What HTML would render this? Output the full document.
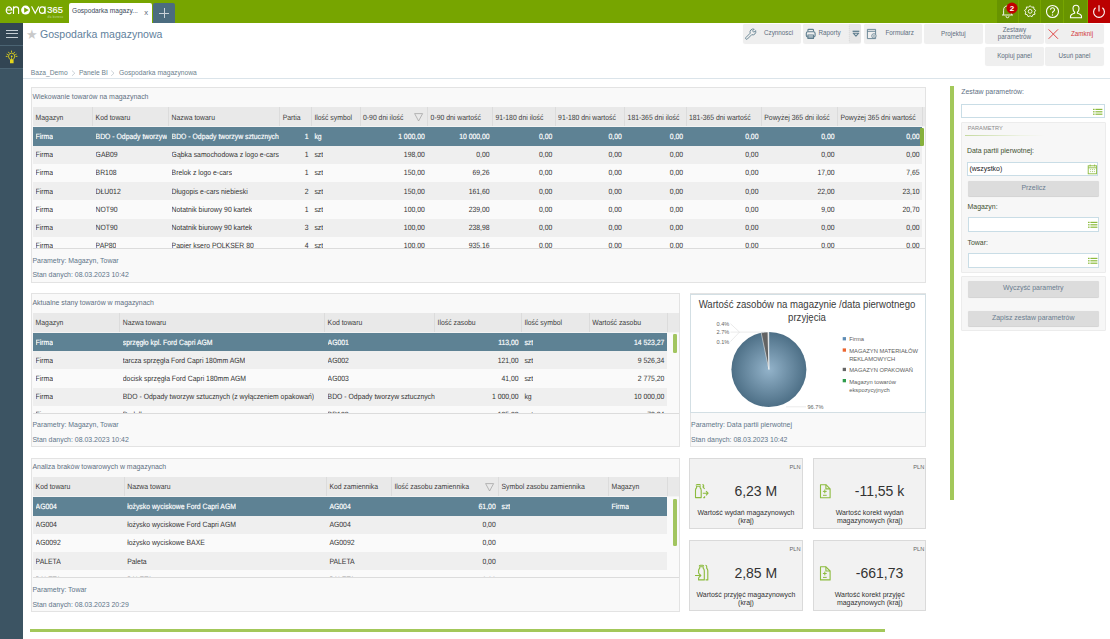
<!DOCTYPE html><html><head><meta charset="utf-8"><style>
*{box-sizing:border-box;margin:0;padding:0}
html,body{width:1110px;height:639px;overflow:hidden;background:#fff;font-family:"Liberation Sans",sans-serif;color:#333}
.a{position:absolute}
.t{white-space:nowrap;position:absolute;line-height:1}
.btn{position:absolute;background:#efefef;border-radius:2px;box-shadow:0 0.5px 0.8px rgba(0,0,0,.07);color:#5d6e7e;font-size:6.3px;text-align:center;white-space:nowrap}
.panel{position:absolute;background:#f9f9f9;border:0.6px solid #e3e3e3}
.ptitle{position:absolute;font-size:6.94px;color:#5e6f82;white-space:nowrap;line-height:1}
.pfoot{position:absolute;font-size:6.94px;color:#607589;white-space:nowrap;line-height:1}
table{border-collapse:collapse;table-layout:fixed;font-size:6.94px;color:#333}
td,th{white-space:nowrap;overflow:hidden;padding:0 3px;font-weight:normal;text-align:left}
th{background:#e9e9e9;border-right:0.6px solid #f7f7f7;color:#3c3c3c}
td.r,th.r{text-align:right}
tr.sel td{background:#5f8395;color:#fff;font-weight:bold}
tr.ev td{background:#efefef}
tr.od td{background:#fafafa}
.tblwrap{position:absolute;overflow:hidden;border-bottom:0.6px solid #dcdcdc;background:#fafafa}
.card{position:absolute;background:#f2f2f2;border:0.6px solid #dadada}
</style></head><body>
<div class="a" style="left:0;top:0;width:1110px;height:23px;background:#77a500"></div>
<svg class="a" style="left:0;top:0" width="70" height="23" viewBox="0 0 70 23">
<g fill="none" stroke="#fff" stroke-width="1.15" stroke-linecap="round">
<path d="M6.2,10 H11.8 A2.8,3.4 0 1 0 11.1,12.6"/>
<path d="M13.5,13.4 V6.8 M13.5,9.6 A2.55,2.7 0 0 1 18.6,9.6 V13.4"/>
<path d="M31.8,6.8 L35.2,13.3 L38.6,6.8"/>
<ellipse cx="42.2" cy="10.1" rx="2.8" ry="3.3"/>
<path d="M45,6.8 V13.4"/>
</g>
<circle cx="25.6" cy="10.1" r="4.5" fill="#fff"/>
<path d="M24.2,7.4 L28.8,10.1 L24.2,12.8 Z" fill="#77a500"/>
<text x="47.2" y="13.1" font-family="Liberation Sans" font-size="9.3" fill="#fff" stroke="#fff" stroke-width="0.15" textLength="15.8">365</text>
<text x="47.5" y="17.6" font-family="Liberation Sans" font-size="2.6" fill="#c8dca8" textLength="15.5">dla biznesu</text>
</svg>
<div class="a" style="left:69px;top:3px;width:83px;height:20px;background:#fff;border-radius:2px 2px 0 0"></div>
<div class="t" style="left:72px;top:8.3px;font-size:6.6px;color:#3a4a5a">Gospodarka magazy...</div>
<div class="t" style="left:144.3px;top:9px;font-size:7.6px;color:#5a6a78">x</div>
<div class="a" style="left:153px;top:3px;width:22px;height:20px;background:#4b6c7f;border-radius:2px 2px 0 0"></div>
<div class="a" style="left:159px;top:12.6px;width:10.4px;height:1.2px;background:#c9d3da"></div>
<div class="a" style="left:163.6px;top:8px;width:1.2px;height:10.4px;background:#c9d3da"></div>
<div class="a" style="left:997px;top:0;width:21.4px;height:23px;background:#689400"></div>
<div class="a" style="left:1019px;top:0;width:21.4px;height:23px;background:#689400"></div>
<div class="a" style="left:1041px;top:0;width:22.4px;height:23px;background:#689400"></div>
<div class="a" style="left:1064px;top:0;width:23.4px;height:23px;background:#689400"></div>
<div class="a" style="left:1088px;top:0;width:22px;height:23px;background:#bb0000"></div>
<svg class="a" style="left:997px;top:0" width="22" height="23" viewBox="0 0 22 23">
<path d="M6.6,14.4 V10.2 A3.9,4.2 0 0 1 14.4,10.2 V14.4 L15.6,15 H5.4 Z" fill="none" stroke="#fff" stroke-width="0.9" stroke-linejoin="round"/>
<path d="M9,16.2 A1.5,1.5 0 0 0 12,16.2" fill="none" stroke="#fff" stroke-width="0.9"/>
<circle cx="15" cy="8.1" r="5.6" fill="#c00000"/>
<text x="15" y="10.9" text-anchor="middle" font-family="Liberation Sans" font-weight="bold" font-size="8" fill="#fff">2</text>
</svg>
<svg class="a" style="left:1019px;top:0" width="22" height="23" viewBox="0 0 22 23">
<path d="M11.10,5.65 L12.60,7.22 L14.76,6.98 L14.91,9.15 L16.71,10.36 L15.43,12.11 L16.04,14.20 L13.93,14.72 L13.05,16.71 L11.10,15.75 L9.15,16.71 L8.27,14.72 L6.16,14.20 L6.77,12.11 L5.49,10.36 L7.29,9.15 L7.44,6.98 L9.60,7.22 Z" fill="none" stroke="#fff" stroke-width="0.9" stroke-linejoin="round"/>
<circle cx="11.1" cy="11.35" r="1.9" fill="none" stroke="#fff" stroke-width="0.9"/>
</svg>
<svg class="a" style="left:1041px;top:0" width="23" height="23" viewBox="0 0 23 23">
<circle cx="11.5" cy="11.5" r="6" fill="none" stroke="#fff" stroke-width="1.1"/>
<path d="M9.5,9.8 A2,2 0 1 1 12.3,11.6 Q11.5,12 11.5,13.2" fill="none" stroke="#fff" stroke-width="1.1"/>
<circle cx="11.5" cy="15" r="0.7" fill="#fff"/>
</svg>
<svg class="a" style="left:1064px;top:0" width="24" height="23" viewBox="0 0 24 23">
<path d="M12,5.2 A3,3.3 0 0 1 15,8.5 Q15,11 13.4,12.3 L13.4,13.2 Q17.5,14.3 17.5,16.5 V17.8 H6.5 V16.5 Q6.5,14.3 10.6,13.2 L10.6,12.3 Q9,11 9,8.5 A3,3.3 0 0 1 12,5.2 Z" fill="none" stroke="#fff" stroke-width="1.1"/>
</svg>
<svg class="a" style="left:1088px;top:0" width="22" height="23" viewBox="0 0 22 23">
<path d="M7.6,7.8 A5.4,5.4 0 1 0 14.4,7.8" fill="none" stroke="#fff" stroke-width="1.1"/>
<path d="M11,5.2 V11.5" stroke="#fff" stroke-width="1.1"/>
</svg>
<div class="a" style="left:0;top:23px;width:23px;height:616px;background:#3c5463"></div>
<div class="a" style="left:0;top:23px;width:23px;height:45px;background:#324553"></div>
<div class="a" style="left:0;top:45px;width:23px;height:0.8px;background:#4b6473"></div>
<div class="a" style="left:0;top:67.8px;width:23px;height:0.8px;background:#4b6473"></div>
<div class="a" style="left:6px;top:29.8px;width:11.6px;height:1.1px;background:#c5ced4"></div>
<div class="a" style="left:6px;top:33.4px;width:11.6px;height:1.1px;background:#c5ced4"></div>
<div class="a" style="left:6px;top:36.9px;width:11.6px;height:1.1px;background:#c5ced4"></div>
<svg class="a" style="left:0;top:46px" width="23" height="22" viewBox="0 46 23 22">
<g stroke="#e2d41c" stroke-width="0.9" fill="none" stroke-linecap="round">
<path d="M11.5,51 V51.9 M8.6,52.2 L8.9,52.7 M14.5,52.2 L14.2,52.7 M7,54.2 L7.6,54.5 M16.2,54.3 L15.6,54.6 M6.2,56.4 H7.2 M16,56.4 H17"/>
<path d="M10.2,59.6 Q8.5,58.2 8.5,56.2 A3.1,3.1 0 0 1 14.7,56.2 Q14.7,58.2 13,59.6"/>
</g>
<path d="M10,59.4 H13.6 V63.2 H10 Z M11.1,59.6 L11.6,56 L12.3,59.6 Z" fill="#e2d41c"/>
<circle cx="11.7" cy="56.3" r="0.9" fill="#e2d41c"/>
</svg>
<div class="t" style="left:26px;top:27.6px;font-size:13px;color:#c9c9c9">&#9733;</div>
<div class="t" style="left:40px;top:28.6px;font-size:10.54px;color:#5f819c">Gospodarka magazynowa</div>
<div class="t" style="left:30.8px;top:70.4px;font-size:6.7px;color:#6d7f8e">Baza_Demo</div>
<div class="t" style="left:78.9px;top:70.4px;font-size:6.7px;color:#6d7f8e">Panele BI</div>
<div class="t" style="left:119.1px;top:70.4px;font-size:6.7px;color:#6d7f8e">Gospodarka magazynowa</div>
<svg class="a" style="left:0;top:60px" width="200" height="20" viewBox="0 60 200 20"><path d="M72,70.6 L74.8,73.2 L72,75.8 M111.2,70.6 L114,73.2 L111.2,75.8" fill="none" stroke="#a9b5be" stroke-width="0.6"/></svg>
<div class="a" style="left:23px;top:78px;width:1087px;height:0.8px;background:#dbe4ea"></div>
<div class="btn" style="left:743px;top:24.3px;width:58px;height:18.8px;"></div>
<div class="btn" style="left:803px;top:24.3px;width:58.299999999999955px;height:18.8px;"></div>
<div class="btn" style="left:849.3px;top:24.3px;width:12.0px;height:18.8px;background:#e6e6e6;border-radius:0 2px 2px 0;box-shadow:none"></div>
<div class="btn" style="left:864px;top:24.3px;width:58.39999999999998px;height:18.8px;"></div>
<div class="btn" style="left:924px;top:24.3px;width:58.60000000000002px;height:18.8px;"><span style="position:absolute;left:0;right:0;top:5.4px">Projektuj</span></div>
<div class="btn" style="left:985.3px;top:24.3px;width:58.40000000000009px;height:18.8px;"><span style="position:absolute;left:0;right:0;top:2.8px;line-height:6.5px">Zestawy<br>parametrów</span></div>
<div class="btn" style="left:1045px;top:24.3px;width:58.799999999999955px;height:18.8px;"><span style="position:absolute;left:26px;top:5.4px;color:#d23a3a">Zamknij</span></div>
<div class="btn" style="left:985.3px;top:46.8px;width:58.40000000000009px;height:18.299999999999997px;"><span style="position:absolute;left:0;right:0;top:5.6px">Kopiuj panel</span></div>
<div class="btn" style="left:1045px;top:46.8px;width:58.799999999999955px;height:18.299999999999997px;"><span style="position:absolute;left:0;right:0;top:5.6px">Usuń panel</span></div>
<div class="t" style="left:764px;top:30.3px;font-size:6.3px;color:#5d6e7e">Czynnosci</div>
<div class="t" style="left:818.5px;top:30.3px;font-size:6.3px;color:#5d6e7e">Raporty</div>
<div class="t" style="left:885.5px;top:30.3px;font-size:6.3px;color:#5d6e7e">Formularz</div>
<svg class="a" style="left:0;top:0" width="1110" height="50" viewBox="0 0 1110 50">
<g fill="none" stroke="#5f7e8f" stroke-width="0.9" stroke-linejoin="round">
<path d="M745.9,37.5 L750.2,33.2 A3.1,3.1 0 0 1 754.2,29.2 L752.5,30.9 L753.9,32.3 L755.6,30.6 A3.1,3.1 0 0 1 751.7,34.7 L747.4,39 A1.05,1.05 0 0 1 745.9,37.5 Z"/>
<rect x="806.3" y="31.8" width="8.8" height="5.2" rx="1.6" stroke-width="1.1"/>
<path d="M807.9,31.6 V30.2 Q807.9,29.4 808.7,29.4 H812.7 Q813.5,29.4 813.5,30.2 V31.6" stroke-width="1.1"/>
<path d="M807.9,35 H813.5 V38.4 H807.9 Z" stroke-width="1.1"/>
<path d="M852.6,31.3 H859.3" stroke-width="1.3"/>
<path d="M853.2,33.2 H858.7 L855.95,36.2 Z" stroke-width="1.1"/>
<rect x="867.4" y="29.4" width="8.2" height="9.2" stroke-width="0.9"/>
<path d="M867.4,31.3 H875.6" stroke-width="0.9"/>
<circle cx="873.9" cy="35.9" r="2.2" fill="#efefef" stroke-width="0.8"/>
<circle cx="873.9" cy="35.9" r="0.7" stroke-width="0.5"/>
</g>
<path d="M849.3,26 V42" stroke="#cfcfcf" stroke-width="0.5" stroke-dasharray="1,1"/>
</svg>
<svg class="a" style="left:1045px;top:25px" width="20" height="18" viewBox="0 0 20 18">
<path d="M3.6,4.4 L13,13.8 M13,4.4 L3.6,13.8" stroke="#e04848" stroke-width="1"/>
</svg>
<div class="panel" style="left:31.2px;top:87.4px;width:895.0px;height:195.4px"></div>
<div class="ptitle" style="left:32.4px;top:93.9px">Wiekowanie towarów na magazynach</div>
<div class="pfoot" style="left:32.4px;top:257.5px">Parametry: Magazyn, Towar</div>
<div class="pfoot" style="left:32.4px;top:271.5px">Stan danych: 08.03.2023 10:42</div>
<div class="a" style="left:32.6px;top:107.3px;width:893.4px;height:141.89999999999998px;overflow:hidden;background:#fafafa">
<div class="a" style="left:0;top:0;width:893.4px;height:20.1px;background:#e9e9e9"></div>
<div class="t" style="left:3.0px;top:1.3px;line-height:20.1px;font-size:6.85px;color:#3d3d3d;transform:scaleY(1.12);transform-origin:0 12.42px;text-rendering:geometricPrecision">Magazyn</div>
<div class="a" style="left:59.699999999999996px;top:0;width:1px;height:20.1px;background:#dcdcdc"></div>
<div class="t" style="left:62.99999999999999px;top:1.3px;line-height:20.1px;font-size:6.85px;color:#3d3d3d;transform:scaleY(1.12);transform-origin:0 12.42px;text-rendering:geometricPrecision">Kod towaru</div>
<div class="a" style="left:135.7px;top:0;width:1px;height:20.1px;background:#dcdcdc"></div>
<div class="t" style="left:139.0px;top:1.3px;line-height:20.1px;font-size:6.85px;color:#3d3d3d;transform:scaleY(1.12);transform-origin:0 12.42px;text-rendering:geometricPrecision">Nazwa towaru</div>
<div class="a" style="left:246.79999999999998px;top:0;width:1px;height:20.1px;background:#dcdcdc"></div>
<div class="t" style="left:250.1px;top:1.3px;line-height:20.1px;font-size:6.85px;color:#3d3d3d;transform:scaleY(1.12);transform-origin:0 12.42px;text-rendering:geometricPrecision">Partia</div>
<div class="a" style="left:278.49999999999994px;top:0;width:1px;height:20.1px;background:#dcdcdc"></div>
<div class="t" style="left:281.79999999999995px;top:1.3px;line-height:20.1px;font-size:6.85px;color:#3d3d3d;transform:scaleY(1.12);transform-origin:0 12.42px;text-rendering:geometricPrecision">Ilość symbol</div>
<div class="a" style="left:327.09999999999997px;top:0;width:1px;height:20.1px;background:#dcdcdc"></div>
<div class="t" style="left:330.4px;top:1.3px;line-height:20.1px;font-size:6.85px;color:#3d3d3d;transform:scaleY(1.12);transform-origin:0 12.42px;text-rendering:geometricPrecision">0-90 dni ilość</div>
<div class="a" style="left:394.7px;top:0;width:1px;height:20.1px;background:#dcdcdc"></div>
<div class="t" style="left:398.0px;top:1.3px;line-height:20.1px;font-size:6.85px;color:#3d3d3d;transform:scaleY(1.12);transform-origin:0 12.42px;text-rendering:geometricPrecision">0-90 dni wartość</div>
<div class="a" style="left:459.49999999999994px;top:0;width:1px;height:20.1px;background:#dcdcdc"></div>
<div class="t" style="left:462.79999999999995px;top:1.3px;line-height:20.1px;font-size:6.85px;color:#3d3d3d;transform:scaleY(1.12);transform-origin:0 12.42px;text-rendering:geometricPrecision">91-180 dni ilość</div>
<div class="a" style="left:522.2px;top:0;width:1px;height:20.1px;background:#dcdcdc"></div>
<div class="t" style="left:525.5px;top:1.3px;line-height:20.1px;font-size:6.85px;color:#3d3d3d;transform:scaleY(1.12);transform-origin:0 12.42px;text-rendering:geometricPrecision">91-180 dni wartość</div>
<div class="a" style="left:591.7px;top:0;width:1px;height:20.1px;background:#dcdcdc"></div>
<div class="t" style="left:595.0px;top:1.3px;line-height:20.1px;font-size:6.85px;color:#3d3d3d;transform:scaleY(1.12);transform-origin:0 12.42px;text-rendering:geometricPrecision">181-365 dni ilość</div>
<div class="a" style="left:653.1px;top:0;width:1px;height:20.1px;background:#dcdcdc"></div>
<div class="t" style="left:656.4px;top:1.3px;line-height:20.1px;font-size:6.85px;color:#3d3d3d;transform:scaleY(1.12);transform-origin:0 12.42px;text-rendering:geometricPrecision">181-365 dni wartość</div>
<div class="a" style="left:728.4px;top:0;width:1px;height:20.1px;background:#dcdcdc"></div>
<div class="t" style="left:731.6999999999999px;top:1.3px;line-height:20.1px;font-size:6.85px;color:#3d3d3d;transform:scaleY(1.12);transform-origin:0 12.42px;text-rendering:geometricPrecision">Powyżej 365 dni ilość</div>
<div class="a" style="left:804.5px;top:0;width:1px;height:20.1px;background:#dcdcdc"></div>
<div class="t" style="left:807.8px;top:1.3px;line-height:20.1px;font-size:6.85px;color:#3d3d3d;transform:scaleY(1.12);transform-origin:0 12.42px;text-rendering:geometricPrecision">Powyżej 365 dni wartość</div>
<div class="a" style="left:889.5px;top:0;width:1px;height:20.1px;background:#dcdcdc"></div>
<div class="a" style="left:0;top:19.1px;width:893.4px;height:1px;background:#f3f3f3"></div>
<svg class="a" style="left:381.4px;top:5.65px" width="10" height="9" viewBox="0 0 10 9"><path d="M0.6,0.6 H8.6 L4.6,8 Z" fill="none" stroke="#a6a6a6" stroke-width="0.8" stroke-linejoin="round"/></svg>
<div class="a" style="left:0;top:20.1px;width:889.8px;height:18.25px;background:#5e8294"></div>
<div class="t" style="left:3.0px;top:21.5px;line-height:18.25px;font-size:6.85px;color:#fff;-webkit-text-stroke:0.15px #fff;font-weight:normal;max-width:57.599999999999994px;overflow:hidden;transform:scaleY(1.12);transform-origin:0 11.50px;text-rendering:geometricPrecision">Firma</div>
<div class="t" style="left:62.99999999999999px;top:21.5px;line-height:18.25px;font-size:6.85px;color:#fff;-webkit-text-stroke:0.15px #fff;font-weight:normal;max-width:73.6px;overflow:hidden;transform:scaleY(1.12);transform-origin:0 11.50px;text-rendering:geometricPrecision">BDO - Odpady tworzyw</div>
<div class="t" style="left:139.0px;top:21.5px;line-height:18.25px;font-size:6.85px;color:#fff;-webkit-text-stroke:0.15px #fff;font-weight:normal;max-width:108.69999999999999px;overflow:hidden;transform:scaleY(1.12);transform-origin:0 11.50px;text-rendering:geometricPrecision">BDO - Odpady tworzyw sztucznych</div>
<div class="t" style="right:617.4px;top:21.5px;line-height:18.25px;font-size:6.85px;color:#fff;-webkit-text-stroke:0.15px #fff;font-weight:normal;transform:scaleY(1.12);transform-origin:0 11.50px;text-rendering:geometricPrecision">1</div>
<div class="t" style="left:281.79999999999995px;top:21.5px;line-height:18.25px;font-size:6.85px;color:#fff;-webkit-text-stroke:0.15px #fff;font-weight:normal;max-width:46.200000000000024px;overflow:hidden;transform:scaleY(1.12);transform-origin:0 11.50px;text-rendering:geometricPrecision">kg</div>
<div class="t" style="right:501.2px;top:21.5px;line-height:18.25px;font-size:6.85px;color:#fff;-webkit-text-stroke:0.15px #fff;font-weight:normal;transform:scaleY(1.12);transform-origin:0 11.50px;text-rendering:geometricPrecision">1 000,00</div>
<div class="t" style="right:436.40000000000003px;top:21.5px;line-height:18.25px;font-size:6.85px;color:#fff;-webkit-text-stroke:0.15px #fff;font-weight:normal;transform:scaleY(1.12);transform-origin:0 11.50px;text-rendering:geometricPrecision">10 000,00</div>
<div class="t" style="right:373.7px;top:21.5px;line-height:18.25px;font-size:6.85px;color:#fff;-webkit-text-stroke:0.15px #fff;font-weight:normal;transform:scaleY(1.12);transform-origin:0 11.50px;text-rendering:geometricPrecision">0,00</div>
<div class="t" style="right:304.2px;top:21.5px;line-height:18.25px;font-size:6.85px;color:#fff;-webkit-text-stroke:0.15px #fff;font-weight:normal;transform:scaleY(1.12);transform-origin:0 11.50px;text-rendering:geometricPrecision">0,00</div>
<div class="t" style="right:242.8px;top:21.5px;line-height:18.25px;font-size:6.85px;color:#fff;-webkit-text-stroke:0.15px #fff;font-weight:normal;transform:scaleY(1.12);transform-origin:0 11.50px;text-rendering:geometricPrecision">0,00</div>
<div class="t" style="right:167.50000000000006px;top:21.5px;line-height:18.25px;font-size:6.85px;color:#fff;-webkit-text-stroke:0.15px #fff;font-weight:normal;transform:scaleY(1.12);transform-origin:0 11.50px;text-rendering:geometricPrecision">0,00</div>
<div class="t" style="right:91.40000000000002px;top:21.5px;line-height:18.25px;font-size:6.85px;color:#fff;-webkit-text-stroke:0.15px #fff;font-weight:normal;transform:scaleY(1.12);transform-origin:0 11.50px;text-rendering:geometricPrecision">0,00</div>
<div class="t" style="right:6.400000000000023px;top:21.5px;line-height:18.25px;font-size:6.85px;color:#fff;-webkit-text-stroke:0.15px #fff;font-weight:normal;transform:scaleY(1.12);transform-origin:0 11.50px;text-rendering:geometricPrecision">0,00</div>
<div class="a" style="left:0;top:38.35px;width:889.8px;height:18.25px;background:#efefef"></div>
<div class="t" style="left:3.0px;top:39.75px;line-height:18.25px;font-size:6.85px;color:#333;font-weight:normal;max-width:57.599999999999994px;overflow:hidden;transform:scaleY(1.12);transform-origin:0 11.50px;text-rendering:geometricPrecision">Firma</div>
<div class="t" style="left:62.99999999999999px;top:39.75px;line-height:18.25px;font-size:6.85px;color:#333;font-weight:normal;max-width:73.6px;overflow:hidden;transform:scaleY(1.12);transform-origin:0 11.50px;text-rendering:geometricPrecision">GAB09</div>
<div class="t" style="left:139.0px;top:39.75px;line-height:18.25px;font-size:6.85px;color:#333;font-weight:normal;max-width:108.69999999999999px;overflow:hidden;transform:scaleY(1.12);transform-origin:0 11.50px;text-rendering:geometricPrecision">Gąbka samochodowa z logo e-cars</div>
<div class="t" style="right:617.4px;top:39.75px;line-height:18.25px;font-size:6.85px;color:#333;font-weight:normal;transform:scaleY(1.12);transform-origin:0 11.50px;text-rendering:geometricPrecision">1</div>
<div class="t" style="left:281.79999999999995px;top:39.75px;line-height:18.25px;font-size:6.85px;color:#333;font-weight:normal;max-width:46.200000000000024px;overflow:hidden;transform:scaleY(1.12);transform-origin:0 11.50px;text-rendering:geometricPrecision">szt</div>
<div class="t" style="right:501.2px;top:39.75px;line-height:18.25px;font-size:6.85px;color:#333;font-weight:normal;transform:scaleY(1.12);transform-origin:0 11.50px;text-rendering:geometricPrecision">198,00</div>
<div class="t" style="right:436.40000000000003px;top:39.75px;line-height:18.25px;font-size:6.85px;color:#333;font-weight:normal;transform:scaleY(1.12);transform-origin:0 11.50px;text-rendering:geometricPrecision">0,00</div>
<div class="t" style="right:373.7px;top:39.75px;line-height:18.25px;font-size:6.85px;color:#333;font-weight:normal;transform:scaleY(1.12);transform-origin:0 11.50px;text-rendering:geometricPrecision">0,00</div>
<div class="t" style="right:304.2px;top:39.75px;line-height:18.25px;font-size:6.85px;color:#333;font-weight:normal;transform:scaleY(1.12);transform-origin:0 11.50px;text-rendering:geometricPrecision">0,00</div>
<div class="t" style="right:242.8px;top:39.75px;line-height:18.25px;font-size:6.85px;color:#333;font-weight:normal;transform:scaleY(1.12);transform-origin:0 11.50px;text-rendering:geometricPrecision">0,00</div>
<div class="t" style="right:167.50000000000006px;top:39.75px;line-height:18.25px;font-size:6.85px;color:#333;font-weight:normal;transform:scaleY(1.12);transform-origin:0 11.50px;text-rendering:geometricPrecision">0,00</div>
<div class="t" style="right:91.40000000000002px;top:39.75px;line-height:18.25px;font-size:6.85px;color:#333;font-weight:normal;transform:scaleY(1.12);transform-origin:0 11.50px;text-rendering:geometricPrecision">0,00</div>
<div class="t" style="right:6.400000000000023px;top:39.75px;line-height:18.25px;font-size:6.85px;color:#333;font-weight:normal;transform:scaleY(1.12);transform-origin:0 11.50px;text-rendering:geometricPrecision">0,00</div>
<div class="a" style="left:0;top:56.6px;width:889.8px;height:18.25px;background:#fafafa"></div>
<div class="t" style="left:3.0px;top:58.0px;line-height:18.25px;font-size:6.85px;color:#333;font-weight:normal;max-width:57.599999999999994px;overflow:hidden;transform:scaleY(1.12);transform-origin:0 11.50px;text-rendering:geometricPrecision">Firma</div>
<div class="t" style="left:62.99999999999999px;top:58.0px;line-height:18.25px;font-size:6.85px;color:#333;font-weight:normal;max-width:73.6px;overflow:hidden;transform:scaleY(1.12);transform-origin:0 11.50px;text-rendering:geometricPrecision">BR108</div>
<div class="t" style="left:139.0px;top:58.0px;line-height:18.25px;font-size:6.85px;color:#333;font-weight:normal;max-width:108.69999999999999px;overflow:hidden;transform:scaleY(1.12);transform-origin:0 11.50px;text-rendering:geometricPrecision">Brelok z logo e-cars</div>
<div class="t" style="right:617.4px;top:58.0px;line-height:18.25px;font-size:6.85px;color:#333;font-weight:normal;transform:scaleY(1.12);transform-origin:0 11.50px;text-rendering:geometricPrecision">1</div>
<div class="t" style="left:281.79999999999995px;top:58.0px;line-height:18.25px;font-size:6.85px;color:#333;font-weight:normal;max-width:46.200000000000024px;overflow:hidden;transform:scaleY(1.12);transform-origin:0 11.50px;text-rendering:geometricPrecision">szt</div>
<div class="t" style="right:501.2px;top:58.0px;line-height:18.25px;font-size:6.85px;color:#333;font-weight:normal;transform:scaleY(1.12);transform-origin:0 11.50px;text-rendering:geometricPrecision">150,00</div>
<div class="t" style="right:436.40000000000003px;top:58.0px;line-height:18.25px;font-size:6.85px;color:#333;font-weight:normal;transform:scaleY(1.12);transform-origin:0 11.50px;text-rendering:geometricPrecision">69,26</div>
<div class="t" style="right:373.7px;top:58.0px;line-height:18.25px;font-size:6.85px;color:#333;font-weight:normal;transform:scaleY(1.12);transform-origin:0 11.50px;text-rendering:geometricPrecision">0,00</div>
<div class="t" style="right:304.2px;top:58.0px;line-height:18.25px;font-size:6.85px;color:#333;font-weight:normal;transform:scaleY(1.12);transform-origin:0 11.50px;text-rendering:geometricPrecision">0,00</div>
<div class="t" style="right:242.8px;top:58.0px;line-height:18.25px;font-size:6.85px;color:#333;font-weight:normal;transform:scaleY(1.12);transform-origin:0 11.50px;text-rendering:geometricPrecision">0,00</div>
<div class="t" style="right:167.50000000000006px;top:58.0px;line-height:18.25px;font-size:6.85px;color:#333;font-weight:normal;transform:scaleY(1.12);transform-origin:0 11.50px;text-rendering:geometricPrecision">0,00</div>
<div class="t" style="right:91.40000000000002px;top:58.0px;line-height:18.25px;font-size:6.85px;color:#333;font-weight:normal;transform:scaleY(1.12);transform-origin:0 11.50px;text-rendering:geometricPrecision">17,00</div>
<div class="t" style="right:6.400000000000023px;top:58.0px;line-height:18.25px;font-size:6.85px;color:#333;font-weight:normal;transform:scaleY(1.12);transform-origin:0 11.50px;text-rendering:geometricPrecision">7,65</div>
<div class="a" style="left:0;top:74.85px;width:889.8px;height:18.25px;background:#efefef"></div>
<div class="t" style="left:3.0px;top:76.25px;line-height:18.25px;font-size:6.85px;color:#333;font-weight:normal;max-width:57.599999999999994px;overflow:hidden;transform:scaleY(1.12);transform-origin:0 11.50px;text-rendering:geometricPrecision">Firma</div>
<div class="t" style="left:62.99999999999999px;top:76.25px;line-height:18.25px;font-size:6.85px;color:#333;font-weight:normal;max-width:73.6px;overflow:hidden;transform:scaleY(1.12);transform-origin:0 11.50px;text-rendering:geometricPrecision">DŁU012</div>
<div class="t" style="left:139.0px;top:76.25px;line-height:18.25px;font-size:6.85px;color:#333;font-weight:normal;max-width:108.69999999999999px;overflow:hidden;transform:scaleY(1.12);transform-origin:0 11.50px;text-rendering:geometricPrecision">Długopis e-cars niebieski</div>
<div class="t" style="right:617.4px;top:76.25px;line-height:18.25px;font-size:6.85px;color:#333;font-weight:normal;transform:scaleY(1.12);transform-origin:0 11.50px;text-rendering:geometricPrecision">2</div>
<div class="t" style="left:281.79999999999995px;top:76.25px;line-height:18.25px;font-size:6.85px;color:#333;font-weight:normal;max-width:46.200000000000024px;overflow:hidden;transform:scaleY(1.12);transform-origin:0 11.50px;text-rendering:geometricPrecision">szt</div>
<div class="t" style="right:501.2px;top:76.25px;line-height:18.25px;font-size:6.85px;color:#333;font-weight:normal;transform:scaleY(1.12);transform-origin:0 11.50px;text-rendering:geometricPrecision">150,00</div>
<div class="t" style="right:436.40000000000003px;top:76.25px;line-height:18.25px;font-size:6.85px;color:#333;font-weight:normal;transform:scaleY(1.12);transform-origin:0 11.50px;text-rendering:geometricPrecision">161,60</div>
<div class="t" style="right:373.7px;top:76.25px;line-height:18.25px;font-size:6.85px;color:#333;font-weight:normal;transform:scaleY(1.12);transform-origin:0 11.50px;text-rendering:geometricPrecision">0,00</div>
<div class="t" style="right:304.2px;top:76.25px;line-height:18.25px;font-size:6.85px;color:#333;font-weight:normal;transform:scaleY(1.12);transform-origin:0 11.50px;text-rendering:geometricPrecision">0,00</div>
<div class="t" style="right:242.8px;top:76.25px;line-height:18.25px;font-size:6.85px;color:#333;font-weight:normal;transform:scaleY(1.12);transform-origin:0 11.50px;text-rendering:geometricPrecision">0,00</div>
<div class="t" style="right:167.50000000000006px;top:76.25px;line-height:18.25px;font-size:6.85px;color:#333;font-weight:normal;transform:scaleY(1.12);transform-origin:0 11.50px;text-rendering:geometricPrecision">0,00</div>
<div class="t" style="right:91.40000000000002px;top:76.25px;line-height:18.25px;font-size:6.85px;color:#333;font-weight:normal;transform:scaleY(1.12);transform-origin:0 11.50px;text-rendering:geometricPrecision">22,00</div>
<div class="t" style="right:6.400000000000023px;top:76.25px;line-height:18.25px;font-size:6.85px;color:#333;font-weight:normal;transform:scaleY(1.12);transform-origin:0 11.50px;text-rendering:geometricPrecision">23,10</div>
<div class="a" style="left:0;top:93.1px;width:889.8px;height:18.25px;background:#fafafa"></div>
<div class="t" style="left:3.0px;top:94.5px;line-height:18.25px;font-size:6.85px;color:#333;font-weight:normal;max-width:57.599999999999994px;overflow:hidden;transform:scaleY(1.12);transform-origin:0 11.50px;text-rendering:geometricPrecision">Firma</div>
<div class="t" style="left:62.99999999999999px;top:94.5px;line-height:18.25px;font-size:6.85px;color:#333;font-weight:normal;max-width:73.6px;overflow:hidden;transform:scaleY(1.12);transform-origin:0 11.50px;text-rendering:geometricPrecision">NOT90</div>
<div class="t" style="left:139.0px;top:94.5px;line-height:18.25px;font-size:6.85px;color:#333;font-weight:normal;max-width:108.69999999999999px;overflow:hidden;transform:scaleY(1.12);transform-origin:0 11.50px;text-rendering:geometricPrecision">Notatnik biurowy 90 kartek</div>
<div class="t" style="right:617.4px;top:94.5px;line-height:18.25px;font-size:6.85px;color:#333;font-weight:normal;transform:scaleY(1.12);transform-origin:0 11.50px;text-rendering:geometricPrecision">1</div>
<div class="t" style="left:281.79999999999995px;top:94.5px;line-height:18.25px;font-size:6.85px;color:#333;font-weight:normal;max-width:46.200000000000024px;overflow:hidden;transform:scaleY(1.12);transform-origin:0 11.50px;text-rendering:geometricPrecision">szt</div>
<div class="t" style="right:501.2px;top:94.5px;line-height:18.25px;font-size:6.85px;color:#333;font-weight:normal;transform:scaleY(1.12);transform-origin:0 11.50px;text-rendering:geometricPrecision">100,00</div>
<div class="t" style="right:436.40000000000003px;top:94.5px;line-height:18.25px;font-size:6.85px;color:#333;font-weight:normal;transform:scaleY(1.12);transform-origin:0 11.50px;text-rendering:geometricPrecision">239,00</div>
<div class="t" style="right:373.7px;top:94.5px;line-height:18.25px;font-size:6.85px;color:#333;font-weight:normal;transform:scaleY(1.12);transform-origin:0 11.50px;text-rendering:geometricPrecision">0,00</div>
<div class="t" style="right:304.2px;top:94.5px;line-height:18.25px;font-size:6.85px;color:#333;font-weight:normal;transform:scaleY(1.12);transform-origin:0 11.50px;text-rendering:geometricPrecision">0,00</div>
<div class="t" style="right:242.8px;top:94.5px;line-height:18.25px;font-size:6.85px;color:#333;font-weight:normal;transform:scaleY(1.12);transform-origin:0 11.50px;text-rendering:geometricPrecision">0,00</div>
<div class="t" style="right:167.50000000000006px;top:94.5px;line-height:18.25px;font-size:6.85px;color:#333;font-weight:normal;transform:scaleY(1.12);transform-origin:0 11.50px;text-rendering:geometricPrecision">0,00</div>
<div class="t" style="right:91.40000000000002px;top:94.5px;line-height:18.25px;font-size:6.85px;color:#333;font-weight:normal;transform:scaleY(1.12);transform-origin:0 11.50px;text-rendering:geometricPrecision">9,00</div>
<div class="t" style="right:6.400000000000023px;top:94.5px;line-height:18.25px;font-size:6.85px;color:#333;font-weight:normal;transform:scaleY(1.12);transform-origin:0 11.50px;text-rendering:geometricPrecision">20,70</div>
<div class="a" style="left:0;top:111.35px;width:889.8px;height:18.25px;background:#efefef"></div>
<div class="t" style="left:3.0px;top:112.75px;line-height:18.25px;font-size:6.85px;color:#333;font-weight:normal;max-width:57.599999999999994px;overflow:hidden;transform:scaleY(1.12);transform-origin:0 11.50px;text-rendering:geometricPrecision">Firma</div>
<div class="t" style="left:62.99999999999999px;top:112.75px;line-height:18.25px;font-size:6.85px;color:#333;font-weight:normal;max-width:73.6px;overflow:hidden;transform:scaleY(1.12);transform-origin:0 11.50px;text-rendering:geometricPrecision">NOT90</div>
<div class="t" style="left:139.0px;top:112.75px;line-height:18.25px;font-size:6.85px;color:#333;font-weight:normal;max-width:108.69999999999999px;overflow:hidden;transform:scaleY(1.12);transform-origin:0 11.50px;text-rendering:geometricPrecision">Notatnik biurowy 90 kartek</div>
<div class="t" style="right:617.4px;top:112.75px;line-height:18.25px;font-size:6.85px;color:#333;font-weight:normal;transform:scaleY(1.12);transform-origin:0 11.50px;text-rendering:geometricPrecision">3</div>
<div class="t" style="left:281.79999999999995px;top:112.75px;line-height:18.25px;font-size:6.85px;color:#333;font-weight:normal;max-width:46.200000000000024px;overflow:hidden;transform:scaleY(1.12);transform-origin:0 11.50px;text-rendering:geometricPrecision">szt</div>
<div class="t" style="right:501.2px;top:112.75px;line-height:18.25px;font-size:6.85px;color:#333;font-weight:normal;transform:scaleY(1.12);transform-origin:0 11.50px;text-rendering:geometricPrecision">100,00</div>
<div class="t" style="right:436.40000000000003px;top:112.75px;line-height:18.25px;font-size:6.85px;color:#333;font-weight:normal;transform:scaleY(1.12);transform-origin:0 11.50px;text-rendering:geometricPrecision">238,98</div>
<div class="t" style="right:373.7px;top:112.75px;line-height:18.25px;font-size:6.85px;color:#333;font-weight:normal;transform:scaleY(1.12);transform-origin:0 11.50px;text-rendering:geometricPrecision">0,00</div>
<div class="t" style="right:304.2px;top:112.75px;line-height:18.25px;font-size:6.85px;color:#333;font-weight:normal;transform:scaleY(1.12);transform-origin:0 11.50px;text-rendering:geometricPrecision">0,00</div>
<div class="t" style="right:242.8px;top:112.75px;line-height:18.25px;font-size:6.85px;color:#333;font-weight:normal;transform:scaleY(1.12);transform-origin:0 11.50px;text-rendering:geometricPrecision">0,00</div>
<div class="t" style="right:167.50000000000006px;top:112.75px;line-height:18.25px;font-size:6.85px;color:#333;font-weight:normal;transform:scaleY(1.12);transform-origin:0 11.50px;text-rendering:geometricPrecision">0,00</div>
<div class="t" style="right:91.40000000000002px;top:112.75px;line-height:18.25px;font-size:6.85px;color:#333;font-weight:normal;transform:scaleY(1.12);transform-origin:0 11.50px;text-rendering:geometricPrecision">0,00</div>
<div class="t" style="right:6.400000000000023px;top:112.75px;line-height:18.25px;font-size:6.85px;color:#333;font-weight:normal;transform:scaleY(1.12);transform-origin:0 11.50px;text-rendering:geometricPrecision">0,00</div>
<div class="a" style="left:0;top:129.6px;width:889.8px;height:18.25px;background:#fafafa"></div>
<div class="t" style="left:3.0px;top:131.0px;line-height:18.25px;font-size:6.85px;color:#333;font-weight:normal;max-width:57.599999999999994px;overflow:hidden;transform:scaleY(1.12);transform-origin:0 11.50px;text-rendering:geometricPrecision">Firma</div>
<div class="t" style="left:62.99999999999999px;top:131.0px;line-height:18.25px;font-size:6.85px;color:#333;font-weight:normal;max-width:73.6px;overflow:hidden;transform:scaleY(1.12);transform-origin:0 11.50px;text-rendering:geometricPrecision">PAP80</div>
<div class="t" style="left:139.0px;top:131.0px;line-height:18.25px;font-size:6.85px;color:#333;font-weight:normal;max-width:108.69999999999999px;overflow:hidden;transform:scaleY(1.12);transform-origin:0 11.50px;text-rendering:geometricPrecision">Papier ksero POLKSER 80</div>
<div class="t" style="right:617.4px;top:131.0px;line-height:18.25px;font-size:6.85px;color:#333;font-weight:normal;transform:scaleY(1.12);transform-origin:0 11.50px;text-rendering:geometricPrecision">4</div>
<div class="t" style="left:281.79999999999995px;top:131.0px;line-height:18.25px;font-size:6.85px;color:#333;font-weight:normal;max-width:46.200000000000024px;overflow:hidden;transform:scaleY(1.12);transform-origin:0 11.50px;text-rendering:geometricPrecision">szt</div>
<div class="t" style="right:501.2px;top:131.0px;line-height:18.25px;font-size:6.85px;color:#333;font-weight:normal;transform:scaleY(1.12);transform-origin:0 11.50px;text-rendering:geometricPrecision">100,00</div>
<div class="t" style="right:436.40000000000003px;top:131.0px;line-height:18.25px;font-size:6.85px;color:#333;font-weight:normal;transform:scaleY(1.12);transform-origin:0 11.50px;text-rendering:geometricPrecision">935,16</div>
<div class="t" style="right:373.7px;top:131.0px;line-height:18.25px;font-size:6.85px;color:#333;font-weight:normal;transform:scaleY(1.12);transform-origin:0 11.50px;text-rendering:geometricPrecision">0,00</div>
<div class="t" style="right:304.2px;top:131.0px;line-height:18.25px;font-size:6.85px;color:#333;font-weight:normal;transform:scaleY(1.12);transform-origin:0 11.50px;text-rendering:geometricPrecision">0,00</div>
<div class="t" style="right:242.8px;top:131.0px;line-height:18.25px;font-size:6.85px;color:#333;font-weight:normal;transform:scaleY(1.12);transform-origin:0 11.50px;text-rendering:geometricPrecision">0,00</div>
<div class="t" style="right:167.50000000000006px;top:131.0px;line-height:18.25px;font-size:6.85px;color:#333;font-weight:normal;transform:scaleY(1.12);transform-origin:0 11.50px;text-rendering:geometricPrecision">0,00</div>
<div class="t" style="right:91.40000000000002px;top:131.0px;line-height:18.25px;font-size:6.85px;color:#333;font-weight:normal;transform:scaleY(1.12);transform-origin:0 11.50px;text-rendering:geometricPrecision">0,00</div>
<div class="t" style="right:6.400000000000023px;top:131.0px;line-height:18.25px;font-size:6.85px;color:#333;font-weight:normal;transform:scaleY(1.12);transform-origin:0 11.50px;text-rendering:geometricPrecision">0,00</div>
<div class="a" style="left:0;top:140.89999999999998px;width:893.4px;height:1px;background:#dcdcdc"></div>
<div class="a" style="left:892.4px;top:0;width:1px;height:141.89999999999998px;background:#e2e2e2"></div>
<div class="a" style="left:887.6px;top:21.10000000000001px;width:3.7999999999999545px;height:18.099999999999994px;background:#86b03c;border-radius:1.2px"></div>
</div>
<div class="panel" style="left:31.2px;top:293px;width:649.0px;height:154.2px"></div>
<div class="ptitle" style="left:32.4px;top:299.9px">Aktualne stany towarów w magazynach</div>
<div class="pfoot" style="left:32.4px;top:421.90000000000003px">Parametry: Magazyn, Towar</div>
<div class="pfoot" style="left:32.4px;top:436.6px">Stan danych: 08.03.2023 10:42</div>
<div class="a" style="left:32.6px;top:313px;width:647.0px;height:101px;overflow:hidden;background:#fafafa">
<div class="a" style="left:0;top:0;width:647.0px;height:20.1px;background:#e9e9e9"></div>
<div class="t" style="left:3.0px;top:1.3px;line-height:20.1px;font-size:6.85px;color:#3d3d3d;transform:scaleY(1.12);transform-origin:0 12.42px;text-rendering:geometricPrecision">Magazyn</div>
<div class="a" style="left:86.89999999999999px;top:0;width:1px;height:20.1px;background:#dcdcdc"></div>
<div class="t" style="left:90.19999999999999px;top:1.3px;line-height:20.1px;font-size:6.85px;color:#3d3d3d;transform:scaleY(1.12);transform-origin:0 12.42px;text-rendering:geometricPrecision">Nazwa towaru</div>
<div class="a" style="left:291.7px;top:0;width:1px;height:20.1px;background:#dcdcdc"></div>
<div class="t" style="left:295.0px;top:1.3px;line-height:20.1px;font-size:6.85px;color:#3d3d3d;transform:scaleY(1.12);transform-origin:0 12.42px;text-rendering:geometricPrecision">Kod towaru</div>
<div class="a" style="left:401.7px;top:0;width:1px;height:20.1px;background:#dcdcdc"></div>
<div class="t" style="left:405.0px;top:1.3px;line-height:20.1px;font-size:6.85px;color:#3d3d3d;transform:scaleY(1.12);transform-origin:0 12.42px;text-rendering:geometricPrecision">Ilość zasobu</div>
<div class="a" style="left:488.49999999999994px;top:0;width:1px;height:20.1px;background:#dcdcdc"></div>
<div class="t" style="left:491.79999999999995px;top:1.3px;line-height:20.1px;font-size:6.85px;color:#3d3d3d;transform:scaleY(1.12);transform-origin:0 12.42px;text-rendering:geometricPrecision">Ilość symbol</div>
<div class="a" style="left:556.3000000000001px;top:0;width:1px;height:20.1px;background:#dcdcdc"></div>
<div class="t" style="left:559.6px;top:1.3px;line-height:20.1px;font-size:6.85px;color:#3d3d3d;transform:scaleY(1.12);transform-origin:0 12.42px;text-rendering:geometricPrecision">Wartość zasobu</div>
<div class="a" style="left:634.3000000000001px;top:0;width:1px;height:20.1px;background:#dcdcdc"></div>
<div class="a" style="left:0;top:19.1px;width:647.0px;height:1px;background:#f3f3f3"></div>
<div class="a" style="left:0;top:20.1px;width:634.6px;height:18.2px;background:#5e8294"></div>
<div class="t" style="left:3.0px;top:21.5px;line-height:18.2px;font-size:6.85px;color:#fff;-webkit-text-stroke:0.15px #fff;font-weight:normal;max-width:84.79999999999998px;overflow:hidden;transform:scaleY(1.12);transform-origin:0 11.47px;text-rendering:geometricPrecision">Firma</div>
<div class="t" style="left:90.19999999999999px;top:21.5px;line-height:18.2px;font-size:6.85px;color:#fff;-webkit-text-stroke:0.15px #fff;font-weight:normal;max-width:202.4px;overflow:hidden;transform:scaleY(1.12);transform-origin:0 11.47px;text-rendering:geometricPrecision">sprzęgło kpl. Ford Capri AGM</div>
<div class="t" style="left:295.0px;top:21.5px;line-height:18.2px;font-size:6.85px;color:#fff;-webkit-text-stroke:0.15px #fff;font-weight:normal;max-width:107.6px;overflow:hidden;transform:scaleY(1.12);transform-origin:0 11.47px;text-rendering:geometricPrecision">AG001</div>
<div class="t" style="right:161.00000000000006px;top:21.5px;line-height:18.2px;font-size:6.85px;color:#fff;-webkit-text-stroke:0.15px #fff;font-weight:normal;transform:scaleY(1.12);transform-origin:0 11.47px;text-rendering:geometricPrecision">113,00</div>
<div class="t" style="left:491.79999999999995px;top:21.5px;line-height:18.2px;font-size:6.85px;color:#fff;-webkit-text-stroke:0.15px #fff;font-weight:normal;max-width:65.40000000000006px;overflow:hidden;transform:scaleY(1.12);transform-origin:0 11.47px;text-rendering:geometricPrecision">szt</div>
<div class="t" style="right:15.199999999999978px;top:21.5px;line-height:18.2px;font-size:6.85px;color:#fff;-webkit-text-stroke:0.15px #fff;font-weight:normal;transform:scaleY(1.12);transform-origin:0 11.47px;text-rendering:geometricPrecision">14 523,27</div>
<div class="a" style="left:0;top:38.3px;width:634.6px;height:18.2px;background:#efefef"></div>
<div class="t" style="left:3.0px;top:39.699999999999996px;line-height:18.2px;font-size:6.85px;color:#333;font-weight:normal;max-width:84.79999999999998px;overflow:hidden;transform:scaleY(1.12);transform-origin:0 11.47px;text-rendering:geometricPrecision">Firma</div>
<div class="t" style="left:90.19999999999999px;top:39.699999999999996px;line-height:18.2px;font-size:6.85px;color:#333;font-weight:normal;max-width:202.4px;overflow:hidden;transform:scaleY(1.12);transform-origin:0 11.47px;text-rendering:geometricPrecision">tarcza sprzęgła Ford Capri 180mm AGM</div>
<div class="t" style="left:295.0px;top:39.699999999999996px;line-height:18.2px;font-size:6.85px;color:#333;font-weight:normal;max-width:107.6px;overflow:hidden;transform:scaleY(1.12);transform-origin:0 11.47px;text-rendering:geometricPrecision">AG002</div>
<div class="t" style="right:161.00000000000006px;top:39.699999999999996px;line-height:18.2px;font-size:6.85px;color:#333;font-weight:normal;transform:scaleY(1.12);transform-origin:0 11.47px;text-rendering:geometricPrecision">121,00</div>
<div class="t" style="left:491.79999999999995px;top:39.699999999999996px;line-height:18.2px;font-size:6.85px;color:#333;font-weight:normal;max-width:65.40000000000006px;overflow:hidden;transform:scaleY(1.12);transform-origin:0 11.47px;text-rendering:geometricPrecision">szt</div>
<div class="t" style="right:15.199999999999978px;top:39.699999999999996px;line-height:18.2px;font-size:6.85px;color:#333;font-weight:normal;transform:scaleY(1.12);transform-origin:0 11.47px;text-rendering:geometricPrecision">9 526,34</div>
<div class="a" style="left:0;top:56.5px;width:634.6px;height:18.2px;background:#fafafa"></div>
<div class="t" style="left:3.0px;top:57.9px;line-height:18.2px;font-size:6.85px;color:#333;font-weight:normal;max-width:84.79999999999998px;overflow:hidden;transform:scaleY(1.12);transform-origin:0 11.47px;text-rendering:geometricPrecision">Firma</div>
<div class="t" style="left:90.19999999999999px;top:57.9px;line-height:18.2px;font-size:6.85px;color:#333;font-weight:normal;max-width:202.4px;overflow:hidden;transform:scaleY(1.12);transform-origin:0 11.47px;text-rendering:geometricPrecision">docisk sprzęgła Ford Capri 180mm AGM</div>
<div class="t" style="left:295.0px;top:57.9px;line-height:18.2px;font-size:6.85px;color:#333;font-weight:normal;max-width:107.6px;overflow:hidden;transform:scaleY(1.12);transform-origin:0 11.47px;text-rendering:geometricPrecision">AG003</div>
<div class="t" style="right:161.00000000000006px;top:57.9px;line-height:18.2px;font-size:6.85px;color:#333;font-weight:normal;transform:scaleY(1.12);transform-origin:0 11.47px;text-rendering:geometricPrecision">41,00</div>
<div class="t" style="left:491.79999999999995px;top:57.9px;line-height:18.2px;font-size:6.85px;color:#333;font-weight:normal;max-width:65.40000000000006px;overflow:hidden;transform:scaleY(1.12);transform-origin:0 11.47px;text-rendering:geometricPrecision">szt</div>
<div class="t" style="right:15.199999999999978px;top:57.9px;line-height:18.2px;font-size:6.85px;color:#333;font-weight:normal;transform:scaleY(1.12);transform-origin:0 11.47px;text-rendering:geometricPrecision">2 775,20</div>
<div class="a" style="left:0;top:74.7px;width:634.6px;height:18.2px;background:#efefef"></div>
<div class="t" style="left:3.0px;top:76.10000000000001px;line-height:18.2px;font-size:6.85px;color:#333;font-weight:normal;max-width:84.79999999999998px;overflow:hidden;transform:scaleY(1.12);transform-origin:0 11.47px;text-rendering:geometricPrecision">Firma</div>
<div class="t" style="left:90.19999999999999px;top:76.10000000000001px;line-height:18.2px;font-size:6.85px;color:#333;font-weight:normal;max-width:202.4px;overflow:hidden;transform:scaleY(1.12);transform-origin:0 11.47px;text-rendering:geometricPrecision">BDO - Odpady tworzyw sztucznych (z wyłączeniem opakowań)</div>
<div class="t" style="left:295.0px;top:76.10000000000001px;line-height:18.2px;font-size:6.85px;color:#333;font-weight:normal;max-width:107.6px;overflow:hidden;transform:scaleY(1.12);transform-origin:0 11.47px;text-rendering:geometricPrecision">BDO - Odpady tworzyw sztucznych</div>
<div class="t" style="right:161.00000000000006px;top:76.10000000000001px;line-height:18.2px;font-size:6.85px;color:#333;font-weight:normal;transform:scaleY(1.12);transform-origin:0 11.47px;text-rendering:geometricPrecision">1 000,00</div>
<div class="t" style="left:491.79999999999995px;top:76.10000000000001px;line-height:18.2px;font-size:6.85px;color:#333;font-weight:normal;max-width:65.40000000000006px;overflow:hidden;transform:scaleY(1.12);transform-origin:0 11.47px;text-rendering:geometricPrecision">kg</div>
<div class="t" style="right:15.199999999999978px;top:76.10000000000001px;line-height:18.2px;font-size:6.85px;color:#333;font-weight:normal;transform:scaleY(1.12);transform-origin:0 11.47px;text-rendering:geometricPrecision">10 000,00</div>
<div class="a" style="left:0;top:92.9px;width:634.6px;height:18.2px;background:#fafafa"></div>
<div class="t" style="left:3.0px;top:94.30000000000001px;line-height:18.2px;font-size:6.85px;color:#333;font-weight:normal;max-width:84.79999999999998px;overflow:hidden;transform:scaleY(1.12);transform-origin:0 11.47px;text-rendering:geometricPrecision">Firma</div>
<div class="t" style="left:90.19999999999999px;top:94.30000000000001px;line-height:18.2px;font-size:6.85px;color:#333;font-weight:normal;max-width:202.4px;overflow:hidden;transform:scaleY(1.12);transform-origin:0 11.47px;text-rendering:geometricPrecision">Pudełko</div>
<div class="t" style="left:295.0px;top:94.30000000000001px;line-height:18.2px;font-size:6.85px;color:#333;font-weight:normal;max-width:107.6px;overflow:hidden;transform:scaleY(1.12);transform-origin:0 11.47px;text-rendering:geometricPrecision">BR108</div>
<div class="t" style="right:161.00000000000006px;top:94.30000000000001px;line-height:18.2px;font-size:6.85px;color:#333;font-weight:normal;transform:scaleY(1.12);transform-origin:0 11.47px;text-rendering:geometricPrecision">105,00</div>
<div class="t" style="left:491.79999999999995px;top:94.30000000000001px;line-height:18.2px;font-size:6.85px;color:#333;font-weight:normal;max-width:65.40000000000006px;overflow:hidden;transform:scaleY(1.12);transform-origin:0 11.47px;text-rendering:geometricPrecision">szt</div>
<div class="t" style="right:15.199999999999978px;top:94.30000000000001px;line-height:18.2px;font-size:6.85px;color:#333;font-weight:normal;transform:scaleY(1.12);transform-origin:0 11.47px;text-rendering:geometricPrecision">78,84</div>
<div class="a" style="left:0;top:100px;width:647.0px;height:1px;background:#dcdcdc"></div>
<div class="a" style="left:646.0px;top:0;width:1px;height:101px;background:#e2e2e2"></div>
<div class="a" style="left:640.6999999999999px;top:21px;width:3.6000000000000227px;height:18.5px;background:#a2c560;border-radius:1.2px"></div>
</div>
<div class="panel" style="left:31.2px;top:458.3px;width:649.0px;height:153.49999999999994px"></div>
<div class="ptitle" style="left:32.4px;top:463.9px">Analiza braków towarowych w magazynach</div>
<div class="pfoot" style="left:32.4px;top:586.6999999999999px">Parametry: Towar</div>
<div class="pfoot" style="left:32.4px;top:601.5px">Stan danych: 08.03.2023 20:29</div>
<div class="a" style="left:32.6px;top:477.2px;width:647.0px;height:101.19999999999999px;overflow:hidden;background:#fafafa">
<div class="a" style="left:0;top:0;width:647.0px;height:20.1px;background:#e9e9e9"></div>
<div class="t" style="left:3.0px;top:1.3px;line-height:20.1px;font-size:6.85px;color:#3d3d3d;transform:scaleY(1.12);transform-origin:0 12.42px;text-rendering:geometricPrecision">Kod towaru</div>
<div class="a" style="left:91.3px;top:0;width:1px;height:20.1px;background:#dcdcdc"></div>
<div class="t" style="left:94.6px;top:1.3px;line-height:20.1px;font-size:6.85px;color:#3d3d3d;transform:scaleY(1.12);transform-origin:0 12.42px;text-rendering:geometricPrecision">Nazwa towaru</div>
<div class="a" style="left:293.49999999999994px;top:0;width:1px;height:20.1px;background:#dcdcdc"></div>
<div class="t" style="left:296.79999999999995px;top:1.3px;line-height:20.1px;font-size:6.85px;color:#3d3d3d;transform:scaleY(1.12);transform-origin:0 12.42px;text-rendering:geometricPrecision">Kod zamiennika</div>
<div class="a" style="left:358.49999999999994px;top:0;width:1px;height:20.1px;background:#dcdcdc"></div>
<div class="t" style="left:361.79999999999995px;top:1.3px;line-height:20.1px;font-size:6.85px;color:#3d3d3d;transform:scaleY(1.12);transform-origin:0 12.42px;text-rendering:geometricPrecision">Ilość zasobu zamiennika</div>
<div class="a" style="left:465.59999999999997px;top:0;width:1px;height:20.1px;background:#dcdcdc"></div>
<div class="t" style="left:468.9px;top:1.3px;line-height:20.1px;font-size:6.85px;color:#3d3d3d;transform:scaleY(1.12);transform-origin:0 12.42px;text-rendering:geometricPrecision">Symbol zasobu zamiennika</div>
<div class="a" style="left:575.6px;top:0;width:1px;height:20.1px;background:#dcdcdc"></div>
<div class="t" style="left:578.9px;top:1.3px;line-height:20.1px;font-size:6.85px;color:#3d3d3d;transform:scaleY(1.12);transform-origin:0 12.42px;text-rendering:geometricPrecision">Magazyn</div>
<div class="a" style="left:634.3000000000001px;top:0;width:1px;height:20.1px;background:#dcdcdc"></div>
<div class="a" style="left:0;top:19.1px;width:647.0px;height:1px;background:#f3f3f3"></div>
<svg class="a" style="left:452.29999999999995px;top:5.65px" width="10" height="9" viewBox="0 0 10 9"><path d="M0.6,0.6 H8.6 L4.6,8 Z" fill="none" stroke="#a6a6a6" stroke-width="0.8" stroke-linejoin="round"/></svg>
<div class="a" style="left:0;top:20.1px;width:634.6px;height:18.3px;background:#5e8294"></div>
<div class="t" style="left:3.0px;top:21.5px;line-height:18.3px;font-size:6.85px;color:#fff;-webkit-text-stroke:0.15px #fff;font-weight:normal;max-width:89.19999999999999px;overflow:hidden;transform:scaleY(1.12);transform-origin:0 11.52px;text-rendering:geometricPrecision">AG004</div>
<div class="t" style="left:94.6px;top:21.5px;line-height:18.3px;font-size:6.85px;color:#fff;-webkit-text-stroke:0.15px #fff;font-weight:normal;max-width:199.79999999999995px;overflow:hidden;transform:scaleY(1.12);transform-origin:0 11.52px;text-rendering:geometricPrecision">łożysko wyciskowe Ford Capri AGM</div>
<div class="t" style="left:296.79999999999995px;top:21.5px;line-height:18.3px;font-size:6.85px;color:#fff;-webkit-text-stroke:0.15px #fff;font-weight:normal;max-width:62.6px;overflow:hidden;transform:scaleY(1.12);transform-origin:0 11.52px;text-rendering:geometricPrecision">AG004</div>
<div class="t" style="right:183.90000000000003px;top:21.5px;line-height:18.3px;font-size:6.85px;color:#fff;-webkit-text-stroke:0.15px #fff;font-weight:normal;transform:scaleY(1.12);transform-origin:0 11.52px;text-rendering:geometricPrecision">61,00</div>
<div class="t" style="left:468.9px;top:21.5px;line-height:18.3px;font-size:6.85px;color:#fff;-webkit-text-stroke:0.15px #fff;font-weight:normal;max-width:107.6px;overflow:hidden;transform:scaleY(1.12);transform-origin:0 11.52px;text-rendering:geometricPrecision">szt</div>
<div class="t" style="left:578.9px;top:21.5px;line-height:18.3px;font-size:6.85px;color:#fff;-webkit-text-stroke:0.15px #fff;font-weight:normal;max-width:56.30000000000005px;overflow:hidden;transform:scaleY(1.12);transform-origin:0 11.52px;text-rendering:geometricPrecision">Firma</div>
<div class="a" style="left:0;top:38.400000000000006px;width:634.6px;height:18.3px;background:#efefef"></div>
<div class="t" style="left:3.0px;top:39.800000000000004px;line-height:18.3px;font-size:6.85px;color:#333;font-weight:normal;max-width:89.19999999999999px;overflow:hidden;transform:scaleY(1.12);transform-origin:0 11.52px;text-rendering:geometricPrecision">AG004</div>
<div class="t" style="left:94.6px;top:39.800000000000004px;line-height:18.3px;font-size:6.85px;color:#333;font-weight:normal;max-width:199.79999999999995px;overflow:hidden;transform:scaleY(1.12);transform-origin:0 11.52px;text-rendering:geometricPrecision">łożysko wyciskowe Ford Capri AGM</div>
<div class="t" style="left:296.79999999999995px;top:39.800000000000004px;line-height:18.3px;font-size:6.85px;color:#333;font-weight:normal;max-width:62.6px;overflow:hidden;transform:scaleY(1.12);transform-origin:0 11.52px;text-rendering:geometricPrecision">AG004</div>
<div class="t" style="right:183.90000000000003px;top:39.800000000000004px;line-height:18.3px;font-size:6.85px;color:#333;font-weight:normal;transform:scaleY(1.12);transform-origin:0 11.52px;text-rendering:geometricPrecision">0,00</div>
<div class="a" style="left:0;top:56.7px;width:634.6px;height:18.3px;background:#fafafa"></div>
<div class="t" style="left:3.0px;top:58.1px;line-height:18.3px;font-size:6.85px;color:#333;font-weight:normal;max-width:89.19999999999999px;overflow:hidden;transform:scaleY(1.12);transform-origin:0 11.52px;text-rendering:geometricPrecision">AG0092</div>
<div class="t" style="left:94.6px;top:58.1px;line-height:18.3px;font-size:6.85px;color:#333;font-weight:normal;max-width:199.79999999999995px;overflow:hidden;transform:scaleY(1.12);transform-origin:0 11.52px;text-rendering:geometricPrecision">łożysko wyciskowe BAXE</div>
<div class="t" style="left:296.79999999999995px;top:58.1px;line-height:18.3px;font-size:6.85px;color:#333;font-weight:normal;max-width:62.6px;overflow:hidden;transform:scaleY(1.12);transform-origin:0 11.52px;text-rendering:geometricPrecision">AG0092</div>
<div class="t" style="right:183.90000000000003px;top:58.1px;line-height:18.3px;font-size:6.85px;color:#333;font-weight:normal;transform:scaleY(1.12);transform-origin:0 11.52px;text-rendering:geometricPrecision">0,00</div>
<div class="a" style="left:0;top:75.0px;width:634.6px;height:18.3px;background:#efefef"></div>
<div class="t" style="left:3.0px;top:76.4px;line-height:18.3px;font-size:6.85px;color:#333;font-weight:normal;max-width:89.19999999999999px;overflow:hidden;transform:scaleY(1.12);transform-origin:0 11.52px;text-rendering:geometricPrecision">PALETA</div>
<div class="t" style="left:94.6px;top:76.4px;line-height:18.3px;font-size:6.85px;color:#333;font-weight:normal;max-width:199.79999999999995px;overflow:hidden;transform:scaleY(1.12);transform-origin:0 11.52px;text-rendering:geometricPrecision">Paleta</div>
<div class="t" style="left:296.79999999999995px;top:76.4px;line-height:18.3px;font-size:6.85px;color:#333;font-weight:normal;max-width:62.6px;overflow:hidden;transform:scaleY(1.12);transform-origin:0 11.52px;text-rendering:geometricPrecision">PALETA</div>
<div class="t" style="right:183.90000000000003px;top:76.4px;line-height:18.3px;font-size:6.85px;color:#333;font-weight:normal;transform:scaleY(1.12);transform-origin:0 11.52px;text-rendering:geometricPrecision">0,00</div>
<div class="a" style="left:0;top:93.3px;width:634.6px;height:18.3px;background:#fafafa"></div>
<div class="t" style="left:3.0px;top:94.7px;line-height:18.3px;font-size:6.85px;color:#333;font-weight:normal;max-width:89.19999999999999px;overflow:hidden;transform:scaleY(1.12);transform-origin:0 11.52px;text-rendering:geometricPrecision">PALETA</div>
<div class="t" style="left:94.6px;top:94.7px;line-height:18.3px;font-size:6.85px;color:#333;font-weight:normal;max-width:199.79999999999995px;overflow:hidden;transform:scaleY(1.12);transform-origin:0 11.52px;text-rendering:geometricPrecision">PALETA</div>
<div class="t" style="left:296.79999999999995px;top:94.7px;line-height:18.3px;font-size:6.85px;color:#333;font-weight:normal;max-width:62.6px;overflow:hidden;transform:scaleY(1.12);transform-origin:0 11.52px;text-rendering:geometricPrecision">PALETA</div>
<div class="t" style="right:183.90000000000003px;top:94.7px;line-height:18.3px;font-size:6.85px;color:#333;font-weight:normal;transform:scaleY(1.12);transform-origin:0 11.52px;text-rendering:geometricPrecision">0,00</div>
<div class="a" style="left:0;top:100.19999999999999px;width:647.0px;height:1px;background:#dcdcdc"></div>
<div class="a" style="left:646.0px;top:0;width:1px;height:101.19999999999999px;background:#e2e2e2"></div>
<div class="a" style="left:640.6999999999999px;top:21.80000000000001px;width:3.6000000000000227px;height:46.700000000000045px;background:#a2c560;border-radius:1.2px"></div>
</div>
<div class="a" style="left:29.6px;top:628.7px;width:855.5px;height:3.2px;background:#a3c85a"></div>
<div class="a" style="left:950.2px;top:86px;width:3.6px;height:414px;background:#a3c85a"></div>
<div class="panel" style="left:689.8px;top:293px;width:236.4px;height:153.8px"></div>
<div class="a" style="left:690.2px;top:293.6px;width:235.6px;height:119.8px;background:#fff;border:1px solid #d3dfe4"></div>
<div class="t" style="left:689px;width:236px;text-align:center;top:298.6px;font-size:9.6px;color:#3a3a3a;line-height:12.2px;white-space:normal;transform:scaleY(1.1);transform-origin:0 9px">Wartość zasobów na magazynie /data pierwotnego<br>przyjęcia</div>
<svg class="a" style="left:0;top:0" width="1110" height="639" viewBox="0 0 1110 639">
<defs><radialGradient id="pg" cx="768.9" cy="369.5" r="37.5" gradientUnits="userSpaceOnUse">
<stop offset="0" stop-color="#93b3ca"/><stop offset="1" stop-color="#4d6f86"/></radialGradient></defs>
<g fill="none" stroke="#dcdcdc" stroke-width="0.6">
<path d="M730.5,323.7 L739.5,332.1 L766,332.1"/>
<path d="M730.5,332.1 L739.5,332.1"/>
<path d="M730.5,341.5 L739.5,332.1"/>
<path d="M786,406.8 L806,406.8"/>
</g>
<circle cx="768.9" cy="369.5" r="37.5" fill="url(#pg)"/>
<path d="M768.9,369.5 L761.17,332.81 A37.5,37.5 0 0 1 768.05,332.01 Z" fill="#636363" stroke="#fff" stroke-width="0.5"/>
<path d="M768.9,369.5 L768.05,332.01 A37.5,37.5 0 0 1 768.90,332.00 Z" fill="#e8e8e8" stroke="#fff" stroke-width="0.4"/>
<g font-family="Liberation Sans" font-size="5.6" fill="#666">
<text x="716.5" y="325.7">0.4%</text><text x="716.5" y="334.1">2.7%</text><text x="716.5" y="343.5">0.1%</text>
<text x="807.5" y="409.2">96.7%</text>
</g>
<rect x="842.7" y="337.1" width="3.3" height="3.3" fill="#5f8db5"/>
<rect x="842.7" y="348.4" width="3.3" height="3.3" fill="#ec6530"/>
<rect x="842.7" y="367.8" width="3.3" height="3.3" fill="#666"/>
<rect x="842.7" y="379" width="3.3" height="3.3" fill="#2f9b4c"/>
<g font-family="Liberation Sans" font-size="5.8" fill="#606060">
<text x="849.2" y="341">Firma</text>
<text x="849.2" y="352.9">MAGAZYN MATERIAŁÓW</text>
<text x="849.2" y="360.8">REKLAMOWYCH</text>
<text x="849.2" y="372.1">MAGAZYN OPAKOWAŃ</text>
<text x="849.2" y="384.1">Magazyn towarów</text>
<text x="849.2" y="391.8">ekspozycyjnych</text>
</g>
</svg>
<div class="pfoot" style="left:691px;top:422px">Parametry: Data partii pierwotnej</div>
<div class="pfoot" style="left:691px;top:436.6px">Stan danych: 08.03.2023 10:42</div>
<div class="card" style="left:689.3px;top:458.3px;width:113.4px;height:71px"></div>
<div class="t" style="left:789.5px;top:464.6px;font-size:5.7px;color:#666">PLN</div>
<div class="t" style="left:708.3px;width:95px;text-align:center;top:483.7px;font-size:14px;color:#333">6,23 M</div>
<div class="t" style="left:689.3px;width:113.4px;text-align:center;top:508.5px;font-size:6.94px;line-height:8.6px;color:#333;white-space:normal">Wartość wydań magazynowych<br>(kraj)</div>
<div class="card" style="left:813px;top:458.3px;width:113.4px;height:71px"></div>
<div class="t" style="left:913.2px;top:464.6px;font-size:5.7px;color:#666">PLN</div>
<div class="t" style="left:832px;width:95px;text-align:center;top:483.7px;font-size:14px;color:#333">-11,55 k</div>
<div class="t" style="left:813px;width:113.4px;text-align:center;top:508.5px;font-size:6.94px;line-height:8.6px;color:#333;white-space:normal">Wartość korekt wydań<br>magazynowych (kraj)</div>
<div class="card" style="left:689.3px;top:540.4px;width:113.4px;height:71px"></div>
<div class="t" style="left:789.5px;top:546.6999999999999px;font-size:5.7px;color:#666">PLN</div>
<div class="t" style="left:708.3px;width:95px;text-align:center;top:565.8px;font-size:14px;color:#333">2,85 M</div>
<div class="t" style="left:689.3px;width:113.4px;text-align:center;top:590.6px;font-size:6.94px;line-height:8.6px;color:#333;white-space:normal">Wartość przyjęć magazynowych<br>(kraj)</div>
<div class="card" style="left:813px;top:540.4px;width:113.4px;height:71px"></div>
<div class="t" style="left:913.2px;top:546.6999999999999px;font-size:5.7px;color:#666">PLN</div>
<div class="t" style="left:832px;width:95px;text-align:center;top:565.8px;font-size:14px;color:#333">-661,73</div>
<div class="t" style="left:813px;width:113.4px;text-align:center;top:590.6px;font-size:6.94px;line-height:8.6px;color:#333;white-space:normal">Wartość korekt przyjęć<br>magazynowych (kraj)</div>
<svg class="a" style="left:0;top:0" width="1110" height="639" viewBox="0 0 1110 639"><g fill="none" stroke="#8cbb3e" stroke-width="1.1" stroke-linejoin="round">
<path d="M695.5,497.6 V490.3 Q695.5,488.6 696.6,487.7 V486.2 H700.1 V487.7 Q701.2,488.6 701.2,490.3 V497.6 Z"/>
<path d="M696.1,485.6 Q696.1,484.5 697.2,484.5 H699.6 Q700.6,484.5 700.6,485.6"/>
<path d="M702.4,484.6 Q703.8,484.6 703.8,486 L702.9,486.9 L704.6,488.8 M703.3,497.6 H704.6 V496.3"/>
<path d="M702.8,493.2 H708 M706,491.1 L708.1,493.2 L706,495.3"/>
</g><g fill="none" stroke="#8cbb3e" stroke-width="1.1" stroke-linejoin="round" transform="translate(820,484.2)">
<path d="M0.5,0.5 H5.9 L10.1,4.7 V13.6 H0.5 Z"/>
<path d="M5.9,0.5 V4.7 H10.1"/>
<path d="M4.8,5.3 V9.1 M2.9,7.2 H6.7 M3,11.1 H6.7" stroke-width="1"/>
</g><g fill="none" stroke="#8cbb3e" stroke-width="1.1" stroke-linejoin="round">
<path d="M698.6,573.4 V570.8 Q698.6,569.1 699.7,568.2 V566.7 H703.2 V568.2 Q704.3,569.1 704.3,570.8 V579.9 H698.6 V577.6"/>
<path d="M699.2,566.2 Q699.2,565.2 700.3,565.2 H702.7 Q703.7,565.2 703.7,566.2"/>
<path d="M705.4,565.2 Q706.7,565.2 706.7,566.4 V568.2 Q707.8,569.1 707.8,570.8 V579.9 H705.6"/>
<path d="M695,575.5 H700.8 M698.7,573.4 L700.8,575.5 L698.7,577.6"/>
</g><g fill="none" stroke="#8cbb3e" stroke-width="1.1" stroke-linejoin="round" transform="translate(820,566.3)">
<path d="M0.5,0.5 H5.9 L10.1,4.7 V13.6 H0.5 Z"/>
<path d="M5.9,0.5 V4.7 H10.1"/>
<path d="M4.8,5.3 V9.1 M2.9,7.2 H6.7 M3,11.1 H6.7" stroke-width="1"/>
</g></svg>
<div class="t" style="left:961.2px;top:88.6px;font-size:6.94px;color:#5e7084">Zestaw parametrów:</div>
<div class="a" style="left:961px;top:103.5px;width:143.7px;height:14px;background:#fff;border:1px solid #c9dde6"></div>
<svg class="a" style="left:1092.8px;top:107.6px" width="10" height="8" viewBox="0 0 10 8"><g fill="#8cbb3e"><rect x="0" y="0.8" width="1.6" height="1.2"/><rect x="2.4" y="0.8" width="7" height="1.2"/><rect x="0" y="3.2" width="1.6" height="1.2"/><rect x="2.4" y="3.2" width="7" height="1.2"/><rect x="0" y="5.6" width="1.6" height="1.2"/><rect x="2.4" y="5.6" width="7" height="1.2"/></g></svg>
<div class="a" style="left:961px;top:122px;width:144.5px;height:151px;background:#f7f7f7;border:1px solid #ececec;border-radius:1px"></div>
<div class="t" style="left:967.8px;top:126.4px;font-size:5.64px;color:#8a8a8a;letter-spacing:0.05px">PARAMETRY</div>
<div class="a" style="left:965px;top:134.8px;width:80px;height:1px;background:linear-gradient(90deg,#c5d9a0,#eef3e4 70%,rgba(247,247,247,0))"></div>
<div class="t" style="left:966.9px;top:148.2px;font-size:6.94px;color:#3f5030">Data partii pierwotnej:</div>
<div class="a" style="left:967.4px;top:161.5px;width:131px;height:14.7px;background:#fff;border:1px solid #c9dde6"></div>
<div class="t" style="left:969.5px;top:166.2px;font-size:6.94px;color:#222">(wszystko)</div>
<svg class="a" style="left:1087px;top:163.5px" width="11" height="11" viewBox="0 0 11 11"><g fill="none" stroke="#8cbb3e" stroke-width="0.9"><rect x="1.2" y="1.8" width="8.4" height="8"/><path d="M1.2,3.8 H9.6 M3.3,5.6 H4.1 M5.1,5.6 H5.9 M6.9,5.6 H7.7 M3.3,7.6 H4.1 M5.1,7.6 H5.9 M6.9,7.6 H7.7 M3.2,0.6 V2.4 M7.6,0.6 V2.4"/></g></svg>
<div class="a" style="left:967.8px;top:180.8px;width:131.5px;height:15.2px;background:#dcdcdc;border-radius:1.5px;box-shadow:0 0.6px 0.8px rgba(0,0,0,.15)"></div>
<div class="t" style="left:967.8px;width:131.5px;text-align:center;top:184.6px;font-size:6.94px;color:#6a7d90">Przelicz</div>
<div class="t" style="left:967.5px;top:203.7px;font-size:6.94px;color:#3f5030">Magazyn:</div>
<div class="a" style="left:967.5px;top:217.3px;width:131.2px;height:14.8px;background:#fff;border:1px solid #c9dde6"></div>
<svg class="a" style="left:1088.2px;top:221.2px" width="10" height="8" viewBox="0 0 10 8"><g fill="#8cbb3e"><rect x="0" y="0.8" width="1.6" height="1.2"/><rect x="2.4" y="0.8" width="7" height="1.2"/><rect x="0" y="3.2" width="1.6" height="1.2"/><rect x="2.4" y="3.2" width="7" height="1.2"/><rect x="0" y="5.6" width="1.6" height="1.2"/><rect x="2.4" y="5.6" width="7" height="1.2"/></g></svg>
<div class="t" style="left:967.5px;top:240.2px;font-size:6.94px;color:#3f5030">Towar:</div>
<div class="a" style="left:967.5px;top:253.2px;width:131.2px;height:15.3px;background:#fff;border:1px solid #c9dde6"></div>
<svg class="a" style="left:1088.2px;top:257.2px" width="10" height="8" viewBox="0 0 10 8"><g fill="#8cbb3e"><rect x="0" y="0.8" width="1.6" height="1.2"/><rect x="2.4" y="0.8" width="7" height="1.2"/><rect x="0" y="3.2" width="1.6" height="1.2"/><rect x="2.4" y="3.2" width="7" height="1.2"/><rect x="0" y="5.6" width="1.6" height="1.2"/><rect x="2.4" y="5.6" width="7" height="1.2"/></g></svg>
<div class="a" style="left:961px;top:276px;width:144.5px;height:54.7px;background:#f7f7f7;border:1px solid #ececec;border-radius:1px"></div>
<div class="a" style="left:967.5px;top:281.4px;width:131.5px;height:15.2px;background:#dcdcdc;border-radius:1.5px;box-shadow:0 0.6px 0.8px rgba(0,0,0,.15)"></div>
<div class="t" style="left:967.5px;width:131.5px;text-align:center;top:285.2px;font-size:6.94px;color:#6a7d90">Wyczyść parametry</div>
<div class="a" style="left:967.5px;top:311.2px;width:131.5px;height:15.3px;background:#dcdcdc;border-radius:1.5px;box-shadow:0 0.6px 0.8px rgba(0,0,0,.15)"></div>
<div class="t" style="left:967.5px;width:131.5px;text-align:center;top:315px;font-size:6.94px;color:#6a7d90">Zapisz zestaw parametrów</div>
</body></html>
